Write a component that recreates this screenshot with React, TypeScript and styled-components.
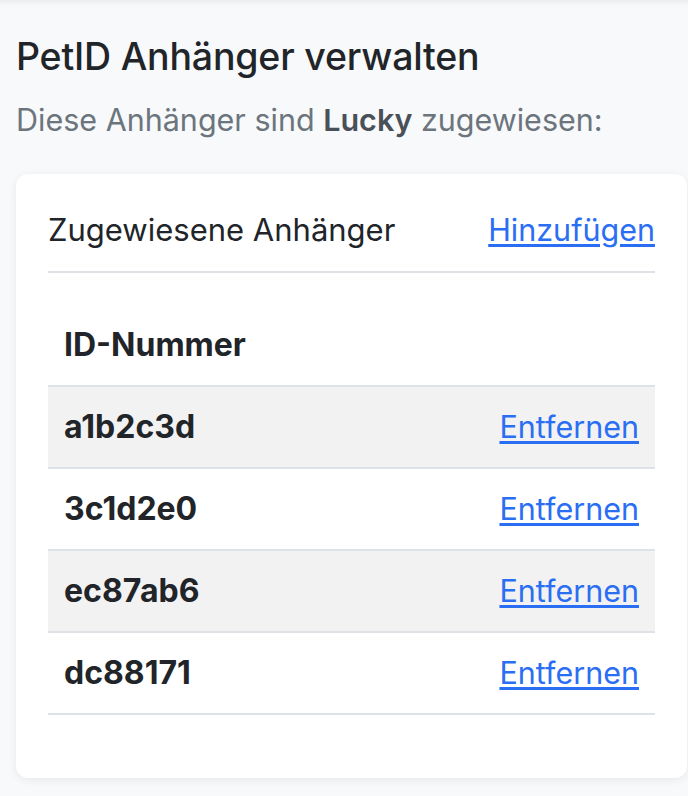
import React from 'react';
import styled, { createGlobalStyle } from 'styled-components';

const GlobalStyle = createGlobalStyle`
  html, body {
    margin: 0;
    padding: 0;
    background: #f8f9fa;
    font-family: Inter, "Noto Sans", "Liberation Sans", sans-serif;
    color: #212529;
  }
`;

const Page = styled.main`
  min-height: 796px;
  box-sizing: border-box;
  padding: 36px 1px 0 16px;
  box-shadow: inset 0 8px 8px -8px rgba(0, 0, 0, 0.1);
`;

const Title = styled.h1`
  margin: 0;
  font-size: 37.5px;
  line-height: 41px;
  font-weight: 500;
  letter-spacing: -0.2px;
`;

const Lead = styled.p`
  margin: 23px 0 0;
  font-size: 30.5px;
  line-height: 39px;
  color: #6c757d;

  strong {
    font-weight: 600;
    color: #495057;
  }
`;

const Card = styled.section`
  margin-top: 35px;
  background: #fff;
  border-radius: 12px;
  box-shadow: 0 2px 10px rgba(0, 0, 0, 0.07);
  padding: 35px 32px 32px;
`;

const CardHeader = styled.div`
  display: flex;
  justify-content: space-between;
  align-items: center;
  padding-bottom: 20px;
  border-bottom: 2px solid #dee2e6;
`;

const CardTitle = styled.h2`
  margin: 0;
  font-size: 31px;
  line-height: 42px;
  font-weight: 400;
`;

const Link = styled.a`
  font-size: 30.5px;
  line-height: 42px;
  color: #2a6ef3;
  text-decoration: underline;
  text-underline-offset: 3px;
  cursor: pointer;
`;

const Table = styled.table`
  width: 100%;
  margin: 32px 0 31px;
  border-collapse: collapse;
  font-size: 32px;
  line-height: 42px;
`;

const HeadCell = styled.th`
  text-align: left;
  font-weight: 700;
  padding: 19px 16px;
  border-bottom: 2px solid #dee2e6;
`;

const Row = styled.tr<{ $striped: boolean }>`
  background: ${(p) => (p.$striped ? '#f2f2f2' : 'transparent')};
`;

const Cell = styled.td<{ $align?: 'left' | 'right' }>`
  padding: 19px 16px;
  text-align: ${(p) => p.$align || 'left'};
  font-weight: 700;
  border-bottom: 2px solid #dee2e6;
`;

const RemoveLink = styled(Link)`
  font-weight: 400;
`;

const tags = ['a1b2c3d', '3c1d2e0', 'ec87ab6', 'dc88171'];

export default function App() {
  return (
    <>
      <GlobalStyle />
      <Page>
        <Title>PetID Anhänger verwalten</Title>
        <Lead>
          Diese Anhänger sind <strong>Lucky</strong> zugewiesen:
        </Lead>
        <Card>
          <CardHeader>
            <CardTitle>Zugewiesene Anhänger</CardTitle>
            <Link>Hinzufügen</Link>
          </CardHeader>
          <Table>
            <thead>
              <tr>
                <HeadCell colSpan={2}>ID-Nummer</HeadCell>
              </tr>
            </thead>
            <tbody>
              {tags.map((id, i) => (
                <Row key={id} $striped={i % 2 === 0}>
                  <Cell>{id}</Cell>
                  <Cell $align="right">
                    <RemoveLink>Entfernen</RemoveLink>
                  </Cell>
                </Row>
              ))}
            </tbody>
          </Table>
        </Card>
      </Page>
    </>
  );
}
